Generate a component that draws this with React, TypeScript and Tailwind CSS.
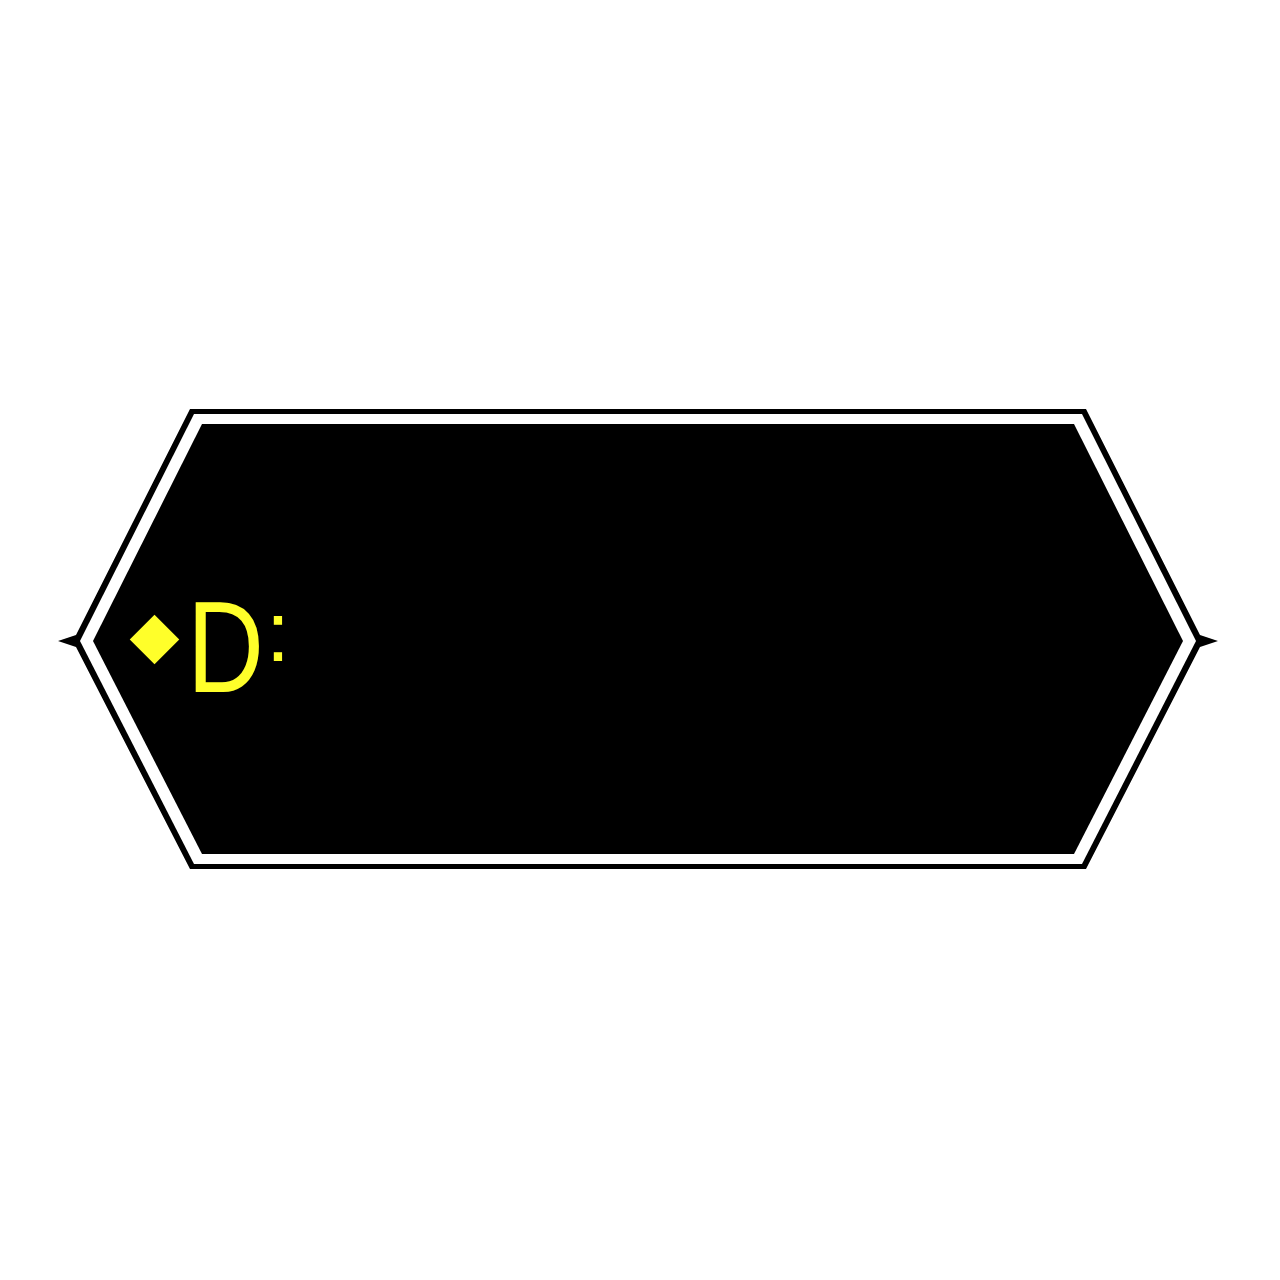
const outer =
  "[clip-path:polygon(132px_0,1028px_0,1142px_226px,1160px_232px,1142px_238px,1028px_460px,132px_460px,18px_238px,0_232px,18px_226px)]";
const ring =
  "[clip-path:polygon(136px_5px,1024px_5px,1138px_232px,1024px_455px,136px_455px,22px_232px)]";
const inner =
  "[clip-path:polygon(144px_15px,1016px_15px,1125px_232px,1016px_445px,144px_445px,35px_232px)]";

function Frame({ children }: { children: React.ReactNode }) {
  return (
    <div className="grid h-[460px] w-[1160px]">
      <div className={`[grid-area:1/1] bg-black ${outer}`} />
      <div className={`[grid-area:1/1] bg-white ${ring}`} />
      <div className={`[grid-area:1/1] flex items-center bg-black pl-[79px] ${inner}`}>{children}</div>
    </div>
  );
}

export default function App() {
  return (
    <div className="min-h-[1280px] w-[1280px] bg-white pl-[58px] pt-[409px]">
      <Frame>
        <div className="flex items-center text-[#ffff2a]" style={{ fontFamily: '"Liberation Sans", Arial, sans-serif' }}>
          <div className="h-[35px] w-[35px] rotate-45 bg-[#ffff2a]" />
          <span className="ml-[15px] inline-block w-[90px] origin-left translate-y-[8px] scale-x-[0.82] text-[130px] leading-none">
            D
          </span>
          <span className="-ml-[11px] inline-block -translate-y-[8px] text-[86px] leading-none">:</span>
        </div>
      </Frame>
    </div>
  );
}
